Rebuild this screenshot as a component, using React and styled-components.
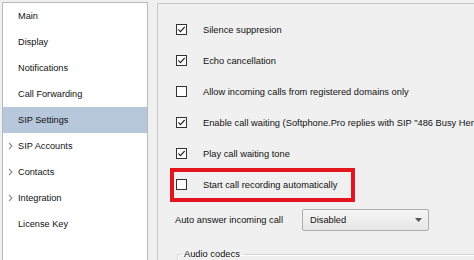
import React from 'react';
import styled, { createGlobalStyle, css } from 'styled-components';

const GlobalStyle = createGlobalStyle`
  html, body {
    margin: 0;
    padding: 0;
    background: #f0f0f0;
    font-family: "Liberation Sans", Arial, sans-serif;
    color: #000;
  }
`;

const Window = styled.div`
  display: flex;
  align-items: flex-start;
  height: 260px;
  padding: 2px 0 0 2px;
  box-sizing: border-box;
  overflow: hidden;
`;

const Sidebar = styled.div`
  width: 144px;
  height: 280px;
  flex-shrink: 0;
  background: #fff;
  border: 1px solid #b9b9b9;
  border-bottom: none;
`;

const NavItem = styled.div`
  display: flex;
  align-items: center;
  height: 26px;
  padding-left: 5px;
  font-size: 9.2px;
  color: #111;
  background: ${(p) => (p.$active ? '#b7c7dc' : 'transparent')};
`;

const Chevron = styled.span`
  display: flex;
  align-items: center;
  width: 10px;
  flex-shrink: 0;
`;

const Panel = styled.div`
  flex: 1;
  min-width: 0;
  height: 280px;
  margin: 1px 0 0 9px;
  padding: 10px 0 0 18px;
  border-top: 1px solid #c9c9c9;
  border-left: 1px solid #c9c9c9;
  background: #f0f0f0;
  font-size: 9.3px;
  color: #111;
  white-space: nowrap;
`;

const Row = styled.div`
  position: relative;
  display: flex;
  align-items: center;
  height: 31px;

  ${(p) =>
    p.$marked &&
    css`
      &::after {
        content: '';
        position: absolute;
        left: -6px;
        top: -1px;
        width: 185px;
        height: 34px;
        box-sizing: border-box;
        border: 4px solid #e2141c;
      }
    `}
`;

const Box = styled.svg`
  flex-shrink: 0;
`;

const Label = styled.span`
  margin-left: 16px;
`;

const FieldRow = styled.div`
  display: flex;
  align-items: center;
  height: 22px;
  margin: 9px 0 0 -1px;
`;

const FieldLabel = styled.span`
  width: 127px;
  flex-shrink: 0;
`;

const Select = styled.div`
  display: flex;
  align-items: center;
  justify-content: space-between;
  width: 127px;
  height: 22px;
  box-sizing: border-box;
  padding: 0 6px 0 7px;
  border: 1px solid #adadad;
  border-radius: 2px;
  background: linear-gradient(#f6f6f6, #e6e6e6);
`;

const Group = styled.fieldset`
  margin: 18px 0 0 1px;
  padding: 0;
  height: 40px;
  border: none;
  border-top: 1px solid #d5d5d5;
  border-left: 1px solid #d5d5d5;
  box-shadow: inset 1px 1px 0 #fff;
`;

const Legend = styled.legend`
  margin-left: 3px;
  padding: 0 3px;
  font-size: 9.3px;
`;

const CheckBox = ({ checked }) => (
  <Box width="11" height="11" viewBox="0 0 11 11">
    <rect x="0.5" y="0.5" width="10" height="10" fill="#fff" stroke="#333" />
    {checked && (
      <polyline points="2.3,5.4 4.4,7.6 8.7,3" fill="none" stroke="#222" strokeWidth="1.1" />
    )}
  </Box>
);

const Arrow = () => (
  <svg width="5" height="8" viewBox="0 0 5 8">
    <polyline points="1,1 4,4 1,7" fill="none" stroke="#8c8c8c" strokeWidth="1.1" />
  </svg>
);

const nav = [
  { label: 'Main' },
  { label: 'Display' },
  { label: 'Notifications' },
  { label: 'Call Forwarding' },
  { label: 'SIP Settings', active: true },
  { label: 'SIP Accounts', expandable: true },
  { label: 'Contacts', expandable: true },
  { label: 'Integration', expandable: true },
  { label: 'License Key' },
];

const options = [
  { label: 'Silence suppresion', checked: true },
  { label: 'Echo cancellation', checked: true },
  { label: 'Allow incoming calls from registered domains only', checked: false },
  { label: 'Enable call waiting (Softphone.Pro replies with SIP "486 Busy Here")', checked: true },
  { label: 'Play call waiting tone', checked: true },
  { label: 'Start call recording automatically', checked: false, marked: true },
];

const App = () => (
  <>
    <GlobalStyle />
    <Window>
      <Sidebar>
        {nav.map((item) => (
          <NavItem key={item.label} $active={item.active}>
            <Chevron>{item.expandable && <Arrow />}</Chevron>
            {item.label}
          </NavItem>
        ))}
      </Sidebar>
      <Panel>
        {options.map((opt) => (
          <Row key={opt.label} $marked={opt.marked}>
            <CheckBox checked={opt.checked} />
            <Label>{opt.label}</Label>
          </Row>
        ))}
        <FieldRow>
          <FieldLabel>Auto answer incoming call</FieldLabel>
          <Select>
            <span>Disabled</span>
            <svg width="7" height="4" viewBox="0 0 7 4">
              <polygon points="0,0 7,0 3.5,4" fill="#555" />
            </svg>
          </Select>
        </FieldRow>
        <Group>
          <Legend>Audio codecs</Legend>
        </Group>
      </Panel>
    </Window>
  </>
);

export default App;
